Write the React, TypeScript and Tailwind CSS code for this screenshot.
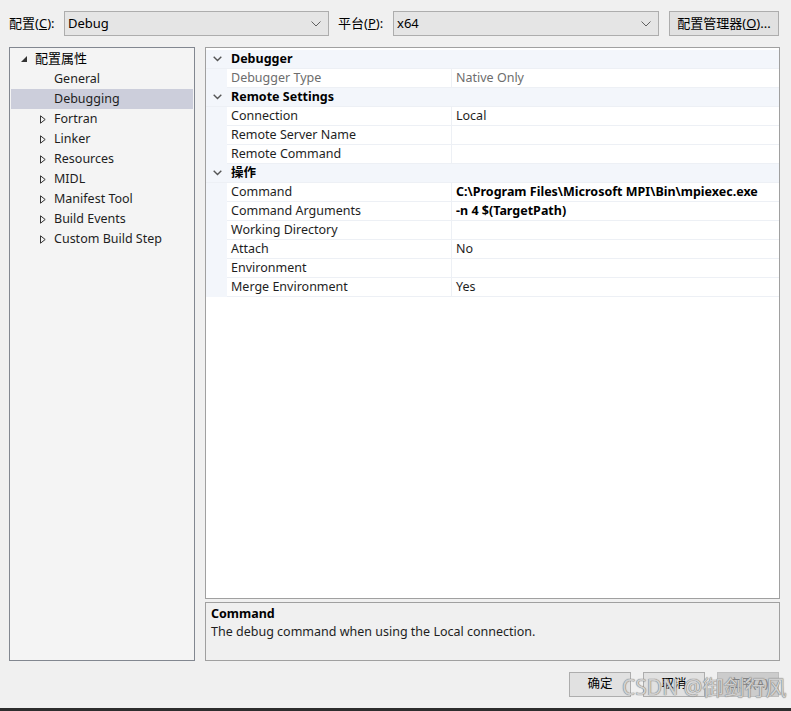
import React from 'react';

const font = { fontFamily: '"Noto Sans", "Noto Sans CJK SC", sans-serif' };

type Row = { name: string; value?: string; bold?: boolean; dim?: boolean };
type Section = { title: string; rows: Row[] };

const sections: Section[] = [
  { title: 'Debugger', rows: [{ name: 'Debugger Type', value: 'Native Only', dim: true }] },
  {
    title: 'Remote Settings',
    rows: [
      { name: 'Connection', value: 'Local' },
      { name: 'Remote Server Name' },
      { name: 'Remote Command' },
    ],
  },
  {
    title: '操作',
    rows: [
      { name: 'Command', value: 'C:\\Program Files\\Microsoft MPI\\Bin\\mpiexec.exe', bold: true },
      { name: 'Command Arguments', value: '-n 4 $(TargetPath)', bold: true },
      { name: 'Working Directory' },
      { name: 'Attach', value: 'No' },
      { name: 'Environment' },
      { name: 'Merge Environment', value: 'Yes' },
    ],
  },
];

const treeItems = [
  { label: 'General' },
  { label: 'Debugging', selected: true },
  { label: 'Fortran', expandable: true },
  { label: 'Linker', expandable: true },
  { label: 'Resources', expandable: true },
  { label: 'MIDL', expandable: true },
  { label: 'Manifest Tool', expandable: true },
  { label: 'Build Events', expandable: true },
  { label: 'Custom Build Step', expandable: true },
];

function ChevronDown() {
  return (
    <svg width="9" height="6" viewBox="0 0 9 6" className="shrink-0">
      <path d="M0.7 0.8 L4.5 4.6 L8.3 0.8" fill="none" stroke="#555" strokeWidth="1.4" />
    </svg>
  );
}

function ComboBox({ value, width }: { value: string; width: string }) {
  return (
    <div className={`${width} h-[25px] flex items-center justify-between bg-[#e5e5e5] border border-[#adadad] pl-[3px] pr-[7px]`}>
      <span className="text-black">{value}</span>
      <svg width="10" height="6" viewBox="0 0 10 6">
        <path d="M0.5 0.5 L5 5 L9.5 0.5" fill="none" stroke="#606060" strokeWidth="1" />
      </svg>
    </div>
  );
}

function Button({ label, disabled }: { label: React.ReactNode; disabled?: boolean }) {
  return (
    <div
      className={`w-[62px] h-[25px] flex items-center justify-center border ${
        disabled ? 'bg-[#cccccc] border-[#bfbfbf] text-[#838383]' : 'bg-[#e1e1e1] border-[#adadad] text-black'
      }`}
    >
      {label}
    </div>
  );
}

export default function App() {
  return (
    <div className="relative w-[791px] h-[711px] bg-[#f0f0f0] flex flex-col text-[12.5px] text-black overflow-hidden" style={font}>
      {/* Top bar */}
      <div className="flex items-center h-[25px] mt-[11px] pl-[9px] text-[13px]">
        <span className="w-[55px]">
          配置(<span className="underline">C</span>):
        </span>
        <ComboBox value="Debug" width="w-[265px]" />
        <span className="ml-[9px] w-[55px]">
          平台(<span className="underline">P</span>):
        </span>
        <ComboBox value="x64" width="w-[266px]" />
        <div className="ml-[10px] w-[110px] h-[25px] flex items-center justify-center bg-[#e1e1e1] border border-[#adadad]">
          配置管理器(<span className="underline">O</span>)...
        </div>
      </div>

      {/* Main area */}
      <div className="flex mt-[11px] pl-[9px] h-[614px]">
        {/* Tree */}
        <div className="w-[186px] h-full bg-[#f4f4f4] border border-[#828790] pt-[1px] px-[1px]">
          <div className="h-[20px] flex items-center">
            <svg width="6" height="6" viewBox="0 0 6 6" className="ml-[10px] mr-[8px]">
              <path d="M6 0 L6 6 L0 6 Z" fill="#333" />
            </svg>
            <span className="text-[13px]">配置属性</span>
          </div>
          {treeItems.map((it) => (
            <div
              key={it.label}
              className={`h-[20px] flex items-center ${it.selected ? 'bg-[#cccedb]' : ''}`}
            >
              <div className="w-[43px] flex justify-end pr-[8px]">
                {it.expandable && (
                  <svg width="6" height="9" viewBox="0 0 6 9">
                    <path d="M0.5 0.8 L5.2 4.5 L0.5 8.2 Z" fill="none" stroke="#333" strokeWidth="1" />
                  </svg>
                )}
              </div>
              <span className="text-[#1e1e1e]">{it.label}</span>
            </div>
          ))}
        </div>

        {/* Right column */}
        <div className="ml-[10px] w-[575px] h-full flex flex-col">
          <div className="h-[552px] bg-white border border-[#a0a0a0] pt-[2px]">
            {sections.map((s) => (
              <div key={s.title}>
                <div className="h-[19px] flex items-center bg-[#f3f6fb] border-b border-[#edf0f5]">
                  <div className="w-[21px] flex justify-center pl-[2px]">
                    <ChevronDown />
                  </div>
                  <span className="pl-[4px] font-bold">{s.title}</span>
                </div>
                {s.rows.map((r) => (
                  <div key={r.name} className="h-[19px] flex">
                    <div className="w-[21px] bg-[#f3f6fb]" />
                    <div
                      className={`w-[225px] pl-[4px] flex items-center border-b border-r border-[#edf0f5] ${
                        r.dim ? 'text-[#6d6d6d]' : 'text-[#1e1e1e]'
                      }`}
                    >
                      {r.name}
                    </div>
                    <div
                      className={`flex-1 pl-[4px] flex items-center border-b border-[#edf0f5] whitespace-nowrap ${
                        r.bold ? 'font-bold text-black' : r.dim ? 'text-[#6d6d6d]' : 'text-[#1e1e1e]'
                      }`}
                    >
                      {r.value}
                    </div>
                  </div>
                ))}
              </div>
            ))}
          </div>
          <div className="mt-[3px] h-[59px] border border-[#a0a0a0] px-[5px] pt-[2px] leading-[18px]">
            <div className="font-bold">Command</div>
            <div className="text-[#1e1e1e]">The debug command when using the Local connection.</div>
          </div>
        </div>
      </div>

      {/* Buttons */}
      <div className="flex justify-end gap-[12px] pr-[12px] mt-[11px]">
        <Button label="确定" />
        <Button label="取消" />
        <Button label="应用(A)" disabled />
      </div>

      {/* Bottom frame edge */}
      <div className="absolute left-0 right-0 bottom-0 h-[3px] bg-[#2d2d2d]" />

      {/* Watermark */}
      <div
        className="absolute left-[622px] top-[672px] text-[21px] text-[#cfcfcf] pointer-events-none whitespace-nowrap"
        style={{ textShadow: '0 0 1px #7a7a7a, 0 0 1px #7a7a7a' }}
      >
        CSDN @御剑行风
      </div>
    </div>
  );
}
